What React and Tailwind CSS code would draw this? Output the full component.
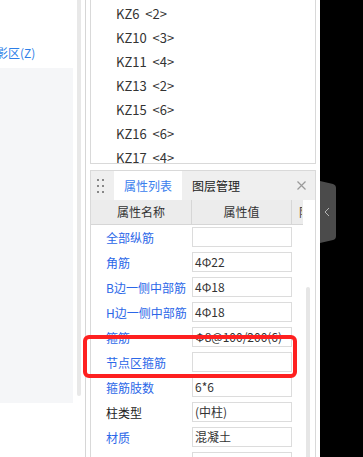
export default function App() {
  const kz = ["KZ6 <2>", "KZ10 <3>", "KZ11 <4>", "KZ13 <2>", "KZ15 <6>", "KZ16 <6>", "KZ17 <4>"];
  const rows = [
    { label: "全部纵筋", value: "", blue: true },
    { label: "角筋", value: "4Φ22", blue: true },
    { label: "B边一侧中部筋", value: "4Φ18", blue: true },
    { label: "H边一侧中部筋", value: "4Φ18", blue: true },
    { label: "箍筋", value: "Φ8@100/200(6)", blue: true },
    { label: "节点区箍筋", value: "", blue: true },
    { label: "箍筋肢数", value: "6*6", blue: true },
    { label: "柱类型", value: "(中柱)", blue: false },
    { label: "材质", value: "混凝土", blue: true },
    { label: "", value: "", blue: false },
  ];
  return (
    <div className="relative flex w-[363px] h-[457px] overflow-hidden bg-white font-['Noto_Sans_CJK_SC',sans-serif]">
      {/* left area */}
      <div className="w-[73px] shrink-0 flex flex-col">
        <div className="h-[68px] pt-[45px] overflow-hidden">
          <div className="-ml-[4px] text-[12px] leading-[16px] text-[#2d7fe8] whitespace-nowrap">影区(Z)</div>
        </div>
        <div className="h-[335px] bg-[#f5f6f8]" />
      </div>
      {/* outer scrollbar */}
      <div className="w-[4px] ml-[4px] h-[396px] shrink-0 bg-[#e8e8e8] rounded-b-[2px]" />
      <div className="w-[4px] shrink-0" />
      <div className="w-[1px] shrink-0 bg-[#d6d6d6]" />
      <div className="w-[4px] shrink-0" />
      {/* main column */}
      <div className="w-[226px] shrink-0 flex flex-col">
        <div className="h-[164px] shrink-0 border-l border-r border-b border-[#d9d9d9] overflow-hidden pt-[2px]">
          {kz.map((k) => (
            <div key={k} className="h-[24px] leading-[24px] pl-[25px] text-[13px] text-[#333] whitespace-pre">
              {k.replace(" ", "  ")}
            </div>
          ))}
        </div>
        <div className="mt-[6px] flex-1 border-l border-r border-t border-[#d9d9d9] flex flex-col overflow-hidden">
          {/* tab header */}
          <div className="h-[29px] shrink-0 bg-[#efefef] flex items-center">
            <div className="ml-[6px] grid grid-cols-2 gap-x-[3px] gap-y-[4px]">
              {[0, 1, 2, 3, 4, 5].map((i) => (
                <div key={i} className="w-[2px] h-[2px] bg-[#888]" />
              ))}
            </div>
            <div className="ml-[10px] w-[68px] h-full bg-white flex items-center justify-center text-[12px] text-[#3a80ee]">
              属性列表
            </div>
            <div className="ml-[10px] text-[12px] text-[#222]">图层管理</div>
            <svg className="ml-auto mr-[9px]" width="9" height="9" viewBox="0 0 9 9">
              <path d="M0.5 0.5 L8.5 8.5 M8.5 0.5 L0.5 8.5" stroke="#9a9a9a" strokeWidth="1.2" />
            </svg>
          </div>
          {/* table header */}
          <div className="flex h-[25px] shrink-0">
            <div className="w-[212px] flex bg-[#ececec] border-b border-[#d6d6d6] text-[12px] text-[#333]">
              <div className="w-[101px] border-r border-[#d6d6d6] flex items-center justify-center">属性名称</div>
              <div className="w-[100px] border-r border-[#d6d6d6] flex items-center justify-center">属性值</div>
              <div className="w-[10px] overflow-hidden flex items-center pl-[7px] whitespace-nowrap">附加</div>
            </div>
          </div>
          {/* rows */}
          <div className="flex flex-1">
            <div className="w-[212px] shrink-0">
              {rows.map((r, i) => (
                <div key={i} className="h-[25px] flex">
                  <div
                    className={`w-[101px] pl-[15px] text-[12px] leading-[25px] whitespace-nowrap ${r.blue ? "text-[#2b67e8]" : "text-[#222]"}`}
                  >
                    {r.label}
                  </div>
                  <div className="mt-[2px] w-[100px] h-[20px] border border-[#dcdcdc] pl-[2px] text-[12px] leading-[18px] text-[#333] whitespace-nowrap overflow-hidden">
                    {r.value}
                  </div>
                </div>
              ))}
            </div>
            <div className="ml-[3px] mt-[62px] w-[4px] flex-none h-[200px] bg-[#e6e6e6] rounded-t-[2px]" />
          </div>
        </div>
      </div>
      <div className="w-[4px] shrink-0" />
      {/* black side */}
      <div className="flex-1 bg-black pt-[181px]">
        <svg width="16" height="62" viewBox="0 0 16 62">
          <path d="M0 0 L13 3 Q16 4 16 7 L16 55 Q16 58 13 59 L0 62 Z" fill="#4b4b4b" />
          <path d="M9 27 L5 31 L9 35" stroke="#b4b4b4" strokeWidth="1" fill="none" />
        </svg>
      </div>
      {/* red highlight */}
      <div className="absolute left-[83px] top-[335px] w-[214px] h-[43px] border-4 border-[#fe2020] rounded-[6px]" />
    </div>
  );
}
